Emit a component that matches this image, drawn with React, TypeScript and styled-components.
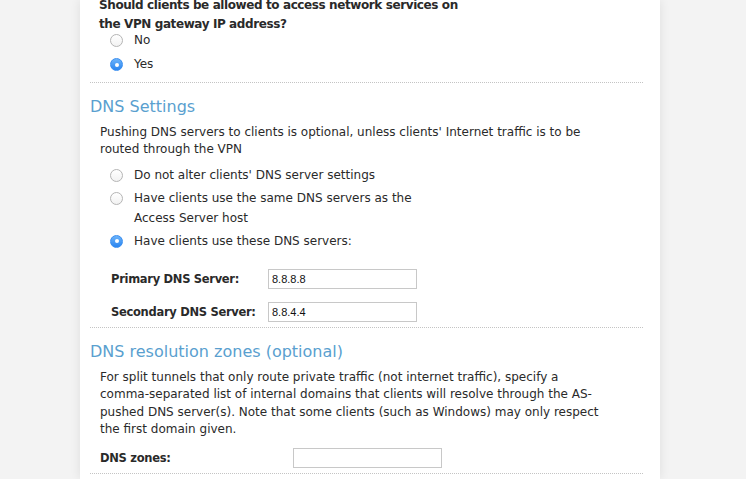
import React from 'react';
import styled, { createGlobalStyle } from 'styled-components';

const GlobalStyle = createGlobalStyle`
  html, body {
    margin: 0;
    padding: 0;
    background: #f3f3f3;
    overflow: hidden;
  }
`;

const Page = styled.div`
  width: 746px;
  height: 479px;
  display: flex;
  padding-left: 80px;
  box-sizing: border-box;
  background: #f3f3f3;
  font-family: 'DejaVu Sans', 'Noto Sans', sans-serif;
  font-size: 12px;
  color: #2a2a2a;
`;

const Panel = styled.div`
  width: 580px;
  height: 100%;
  background: #fff;
  box-shadow: 0 0 10px rgba(0, 0, 0, 0.09);
  padding: 0 17px 0 10px;
  box-sizing: border-box;
  overflow: hidden;
`;

const Section = styled.div<{ $first?: boolean }>`
  border-top: ${({ $first }) => ($first ? 'none' : '1px dotted #c4c4c4')};
  padding-bottom: ${({ $first }) => ($first ? '8px' : '4px')};
`;

const Question = styled.div`
  margin: -4px 0 0 9px;
  font-weight: bold;
  line-height: 19px;
  letter-spacing: -0.4px;
  width: 380px;
`;

const Heading = styled.h2`
  margin: 13px 0 6px;
  font-weight: normal;
  font-size: 16px;
  line-height: 22px;
  color: #5a9fcf;
`;

const Text = styled.p`
  margin: 0 0 0 10px;
  line-height: 17.4px;
  width: 510px;
`;

const RadioList = styled.div<{ $top: number; $gap: number }>`
  display: flex;
  flex-direction: column;
  margin: ${({ $top }) => $top}px 0 0 20px;
  gap: ${({ $gap }) => $gap}px;
`;

const RadioRow = styled.label`
  display: flex;
  align-items: flex-start;
  gap: 11px;
  line-height: 20px;
`;

const RadioMark = styled.span<{ $checked?: boolean }>`
  flex: none;
  width: 13px;
  height: 13px;
  margin-top: 4px;
  border-radius: 50%;
  box-sizing: border-box;
  display: flex;
  align-items: center;
  justify-content: center;
  border: 1px solid ${({ $checked }) => ($checked ? '#3a8ef0' : '#b5b5b5')};
  background: ${({ $checked }) =>
    $checked ? 'linear-gradient(#6cb3fa, #2a85f0)' : 'linear-gradient(#fff, #f2f2f2)'};

  &::after {
    content: '';
    display: ${({ $checked }) => ($checked ? 'block' : 'none')};
    width: 4px;
    height: 4px;
    border-radius: 50%;
    background: #fff;
  }
`;

const RadioLabel = styled.span`
  width: 290px;
`;

const FieldGrid = styled.div<{ $col: number; $indent: number; $top: number }>`
  display: grid;
  grid-template-columns: ${({ $col }) => $col}px 149px;
  row-gap: 13px;
  align-items: center;
  margin: ${({ $top }) => $top}px 0 1px ${({ $indent }) => $indent}px;
`;

const FieldLabel = styled.span`
  font-weight: bold;
  font-size: 11.5px;
  white-space: nowrap;
  letter-spacing: -0.3px;
`;

const Input = styled.input`
  width: 149px;
  height: 20px;
  box-sizing: border-box;
  border: 1px solid #c8c8c8;
  padding: 0 3px;
  font-family: 'Liberation Sans', Arial, sans-serif;
  font-size: 11px;
  color: #111;
  outline: none;
`;

type Option = { label: string; checked?: boolean };

const RadioGroup = ({ options, top, gap }: { options: Option[]; top: number; gap: number }) => (
  <RadioList $top={top} $gap={gap}>
    {options.map((o) => (
      <RadioRow key={o.label}>
        <RadioMark $checked={o.checked} />
        <RadioLabel>{o.label}</RadioLabel>
      </RadioRow>
    ))}
  </RadioList>
);

const App = () => (
  <>
    <GlobalStyle />
    <Page>
      <Panel>
        <Section $first>
          <Question>Should clients be allowed to access network services on the VPN gateway IP address?</Question>
          <RadioGroup options={[{ label: 'No' }, { label: 'Yes', checked: true }]} top={-4} gap={4} />
        </Section>

        <Section>
          <Heading>DNS Settings</Heading>
          <Text>
            Pushing DNS servers to clients is optional, unless clients' Internet traffic is to be routed through
            the VPN
          </Text>
          <RadioGroup
            top={6}
            gap={3}
            options={[
              { label: "Do not alter clients' DNS server settings" },
              { label: 'Have clients use the same DNS servers as the Access Server host' },
              { label: 'Have clients use these DNS servers:', checked: true },
            ]}
          />
          <FieldGrid $col={157} $indent={21} $top={18}>
            <FieldLabel>Primary DNS Server:</FieldLabel>
            <Input defaultValue="8.8.8.8" />
            <FieldLabel>Secondary DNS Server:</FieldLabel>
            <Input defaultValue="8.8.4.4" />
          </FieldGrid>
        </Section>

        <Section>
          <Heading>DNS resolution zones (optional)</Heading>
          <Text>
            For split tunnels that only route private traffic (not internet traffic), specify a comma-separated
            list of internal domains that clients will resolve through the AS-pushed DNS server(s). Note that
            some clients (such as Windows) may only respect the first domain given.
          </Text>
          <FieldGrid $col={193} $indent={10} $top={10}>
            <FieldLabel>DNS zones:</FieldLabel>
            <Input />
          </FieldGrid>
        </Section>
        <Section />
      </Panel>
    </Page>
  </>
);

export default App;
